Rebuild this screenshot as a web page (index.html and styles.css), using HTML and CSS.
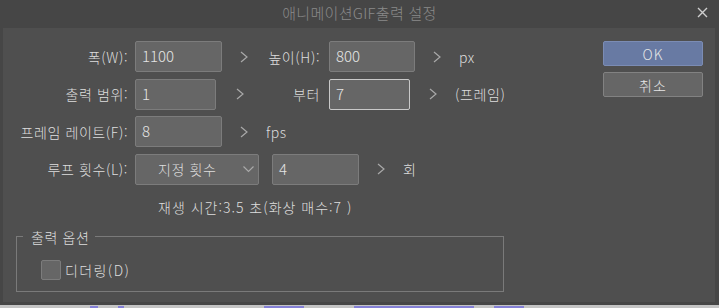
FILE: index.html
```html
<!DOCTYPE html>
<html lang="ko">
<head>
    <meta charset="UTF-8">
    <title>애니메이션GIF출력 설정</title>
    <link rel="stylesheet" href="styles.css">
</head>
<body>
    <div class="dialog">
        <div class="titlebar">
            <span></span>
            <span class="title">애니메이션GIF출력 설정</span>
            <svg class="close" width="11" height="11" viewBox="0 0 11 11">
                <path d="M1 1L10 10M10 1L1 10" stroke="#cfcfcf" stroke-width="1.4" fill="none"/>
            </svg>
        </div>
        <div class="panel">
            <div class="form">
                <div class="row">
                    <span class="lbl">폭(W):</span>
                    <div class="field w87">1100</div>
                    <svg class="arrow" width="8" height="12" viewBox="0 0 8 12"><polyline points="1,1 7,6 1,11"/></svg>
                    <span class="lbl2 w-hi">높이(H):</span>
                    <div class="field w86">800</div>
                    <svg class="arrow" width="8" height="12" viewBox="0 0 8 12"><polyline points="1,1 7,6 1,11"/></svg>
                    <span class="unit">px</span>
                </div>
                <div class="row">
                    <span class="lbl">출력 범위:</span>
                    <div class="field w81">1</div>
                    <svg class="arrow a20" width="8" height="12" viewBox="0 0 8 12"><polyline points="1,1 7,6 1,11"/></svg>
                    <span class="lbl2 w-from">부터</span>
                    <div class="field w81 focus">7</div>
                    <svg class="arrow a19" width="8" height="12" viewBox="0 0 8 12"><polyline points="1,1 7,6 1,11"/></svg>
                    <span class="unit">(프레임)</span>
                </div>
                <div class="row">
                    <span class="lbl">프레임 레이트(F):</span>
                    <div class="field w87">8</div>
                    <svg class="arrow" width="8" height="12" viewBox="0 0 8 12"><polyline points="1,1 7,6 1,11"/></svg>
                    <span class="unit">fps</span>
                </div>
                <div class="row">
                    <span class="lbl">루프 횟수(L):</span>
                    <div class="select">
                        <span>지정 횟수</span>
                        <svg width="11" height="7" viewBox="0 0 11 7"><polyline points="0.5,0.5 5.5,5.5 10.5,0.5"/></svg>
                    </div>
                    <div class="field w87 gap13">4</div>
                    <svg class="arrow" width="8" height="12" viewBox="0 0 8 12"><polyline points="1,1 7,6 1,11"/></svg>
                    <span class="unit">회</span>
                </div>
                <div class="summary">재생 시간:3.5 초(화상 매수:7 )</div>
                <fieldset class="group">
                    <legend>출력 옵션</legend>
                    <label class="check"><span class="box"></span>디더링(D)</label>
                </fieldset>
            </div>
            <div class="buttons">
                <button class="btn ok">OK</button>
                <button class="btn">취소</button>
            </div>
        </div>
    </div>
    <div class="underlay">
        <span class="mark m1"></span>
        <span class="mark m2"></span>
        <span class="mark m3"></span>
        <span class="mark m4"></span>
        <span class="mark m5"></span>
    </div>
</body>
</html>
```

FILE: styles.css
```css
body {
    margin: 0;
    width: 719px;
    height: 308px;
    overflow: hidden;
    background: #c4c4c4;
    font-family: 'Noto Sans CJK KR', 'Noto Sans', sans-serif;
    font-weight: 300;
    color: #dedede;
}
.dialog {
    height: 305px;
    background: #464646;
    display: flex;
    flex-direction: column;
}
.titlebar {
    height: 28px;
    display: grid;
    grid-template-columns: 1fr auto 1fr;
    align-items: center;
}
.title {
    color: #8a8a8a;
    font-size: 15px;
    letter-spacing: 0.3px;
    margin-top: -3px;
}
.close {
    justify-self: end;
    margin-right: 11px;
    margin-top: -4px;
}
.panel {
    height: 274px;
    margin: 0 4px 0 3px;
    background: #4f4f4f;
    display: flex;
}
.form {
    flex: 1;
    padding-top: 13px;
}
.row {
    display: flex;
    align-items: center;
    height: 31px;
    margin-bottom: 6.5px;
    font-size: 14px;
    letter-spacing: 0.6px;
}
.lbl {
    width: 125px;
    text-align: right;
    margin-right: 7px;
}
.lbl2 {
    text-align: right;
    margin-right: 9px;
}
.w-hi { width: 72px; }
.w-from { width: 76px; }
.field {
    box-sizing: border-box;
    height: 31px;
    background: #666666;
    border: 1px solid #7c7c7c;
    border-radius: 2px;
    padding: 3px 0 0 6px;
    font-size: 15px;
    letter-spacing: 0;
    color: #e4e4e4;
}
.field.focus { border-color: #c9c9c9; }
.w87 { width: 87px; }
.w86 { width: 86px; }
.w81 { width: 81px; }
.gap13 { margin-left: 13px; }
.arrow {
    margin-left: 18px;
    fill: none;
    stroke: #a9a9a9;
    stroke-width: 1.2;
}
.arrow.a20 { margin-left: 20px; }
.arrow.a19 { margin-left: 19px; }
.unit {
    margin-left: 18px;
}
.select {
    box-sizing: border-box;
    width: 124px;
    height: 31px;
    background: #666666;
    border: 1px solid #7c7c7c;
    border-radius: 2px;
    display: flex;
    align-items: center;
    padding-left: 22px;
    padding-right: 4px;
}
.select span { flex: 1; }
.select svg {
    fill: none;
    stroke: #a9a9a9;
    stroke-width: 1.2;
}
.summary {
    margin-top: 14px;
    padding-left: 155px;
    font-size: 14px;
    line-height: 16px;
    letter-spacing: 1px;
}
.group {
    box-sizing: border-box;
    width: 488px;
    margin: 14px 0 0 13px;
    padding: 15px 0 11px 24px;
    border: 1px solid #7a7a7a;
    min-width: 0;
}
.group legend {
    margin-left: -18px;
    padding: 0 6px 0 8px;
    font-size: 14px;
    line-height: 16px;
    letter-spacing: 0.6px;
}
.check {
    display: flex;
    align-items: center;
    font-size: 14px;
    letter-spacing: 1.4px;
}
.box {
    box-sizing: border-box;
    width: 20px;
    height: 20px;
    background: #666666;
    border: 1px solid #7c7c7c;
    border-radius: 2px;
    margin-right: 4px;
}
.buttons {
    width: 100px;
    margin: 13px 12px 0 0;
    display: flex;
    flex-direction: column;
    gap: 6px;
}
.btn {
    height: 25px;
    box-sizing: border-box;
    background: #666666;
    border: 1px solid #828282;
    border-radius: 2px;
    color: #e6e6e6;
    font-family: 'Noto Sans CJK KR', 'Noto Sans', sans-serif;
    font-weight: 300;
    font-size: 14px;
    letter-spacing: 1px;
    padding: 0;
}
.btn.ok {
    background: #687aa3;
    border-color: #7b8cb4;
}
.underlay {
    height: 3px;
    display: flex;
}
.mark {
    height: 2px;
    margin-top: 1px;
    background: #8480d6;
}
.m1 { width: 8px; margin-left: 90px; }
.m2 { width: 6px; margin-left: 20px; }
.m3 { width: 40px; margin-left: 140px; }
.m4 { width: 120px; margin-left: 50px; }
.m5 { width: 30px; margin-left: 20px; }
```
